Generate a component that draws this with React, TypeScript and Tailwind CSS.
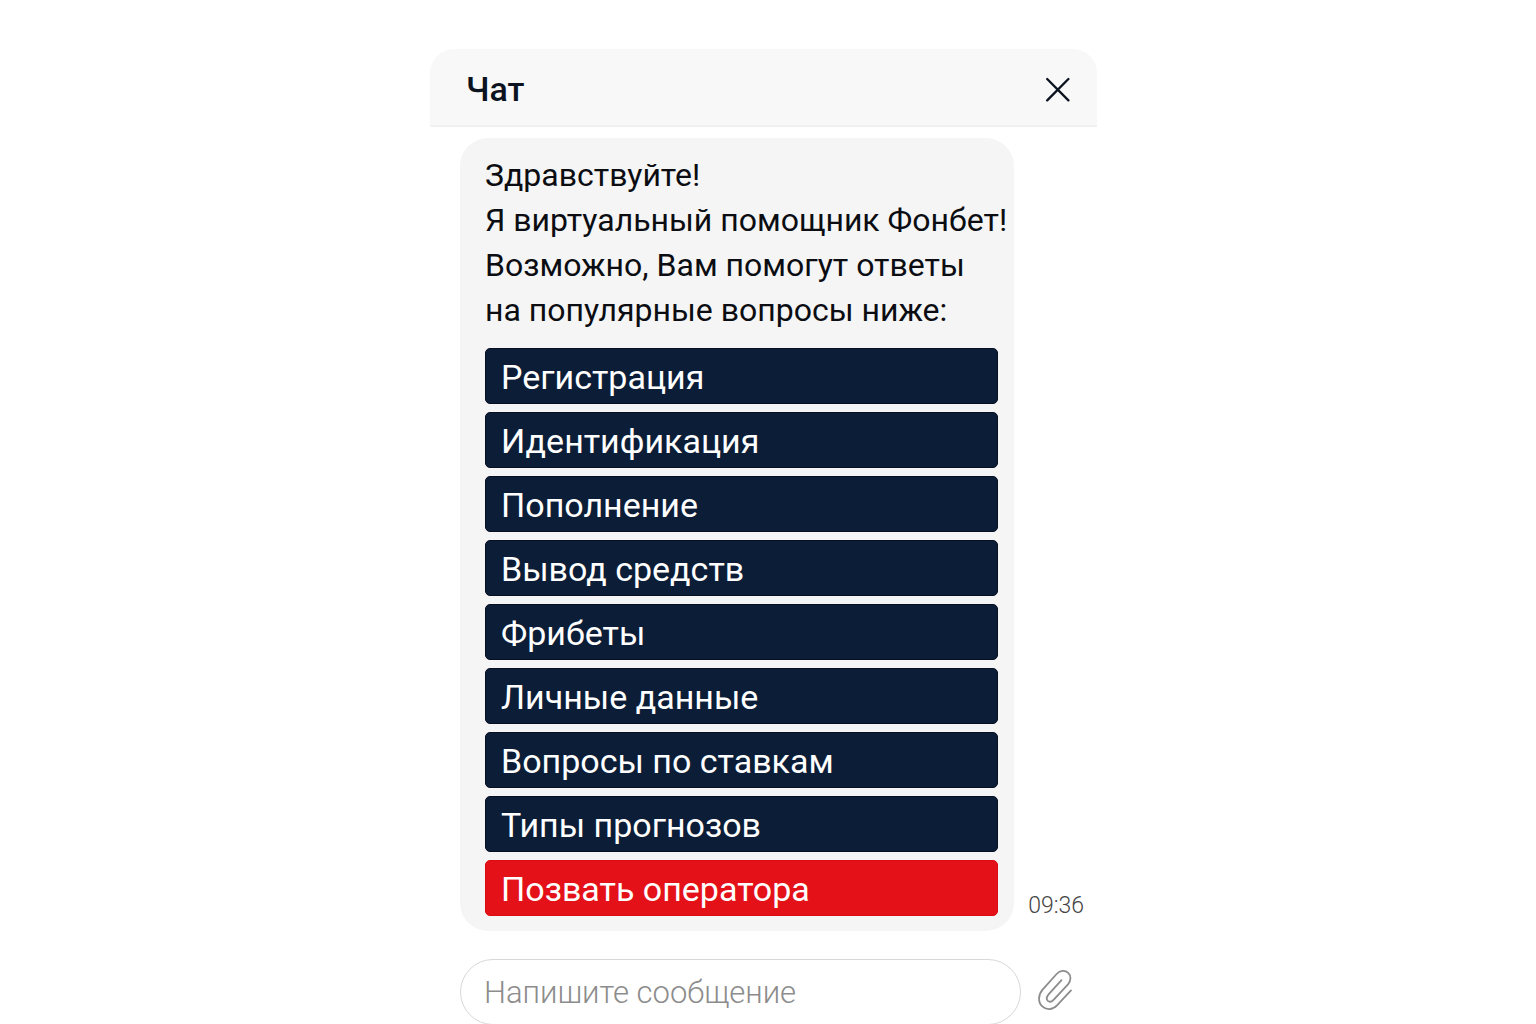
const greeting = [
  "Здравствуйте!",
  "Я виртуальный помощник Фонбет!",
  "Возможно, Вам помогут ответы",
  "на популярные вопросы ниже:",
];

const topics = [
  "Регистрация",
  "Идентификация",
  "Пополнение",
  "Вывод средств",
  "Фрибеты",
  "Личные данные",
  "Вопросы по ставкам",
  "Типы прогнозов",
];

function CloseIcon() {
  return (
    <svg
      viewBox="0 0 26 26"
      className="size-[26px]"
      fill="none"
      stroke="currentColor"
      strokeWidth="2.3"
      strokeLinecap="round"
      aria-hidden="true"
    >
      <path d="M2.2 3 23.4 24.4M23.4 3 2.2 24.4" />
    </svg>
  );
}

function PaperclipIcon() {
  return (
    <svg
      viewBox="0 0 36 42"
      className="h-[42px] w-9"
      fill="none"
      stroke="currentColor"
      strokeWidth="1.8"
      strokeLinecap="round"
      strokeLinejoin="round"
      aria-hidden="true"
    >
      <path d="M24.5 11.2 11.8 25.2C9.4 28 9.2 30.4 10.8 31.9C12.6 33.4 14.8 32.8 16.8 30.6L31 15.4C34.2 11.4 34.2 6.6 31.2 3.8C27.8 .8 23 1.4 19.6 5L5.6 20.6C1.2 25.6 .8 33 5 37.2C9.2 41.4 15.6 41 20 36.4L34 21.4" />
    </svg>
  );
}

export default function App() {
  return (
    <main className="flex h-screen justify-center overflow-hidden bg-white pt-[49px] pr-[9px] font-['Roboto',sans-serif] text-[#0b0d12]">
      <section aria-labelledby="chat-title" className="w-full max-w-[667px]">
        <header className="flex h-[78px] items-center justify-between rounded-t-3xl border-b-2 border-[#f0f0f0] bg-[#f8f8f8] pt-1 pr-[26px] pl-9">
          <h1 id="chat-title" className="text-[34px] leading-10 font-medium text-[#0b1220]">
            Чат
          </h1>
          <button type="button" aria-label="Закрыть" className="text-[#0b1220]">
            <CloseIcon />
          </button>
        </header>

        <div className="flex items-end gap-[14px] pt-[11px] pr-[13px] pl-[30px]">
          <div className="min-w-0 flex-1 rounded-[28px] bg-[#f5f5f5] pt-[15px] pr-4 pb-[15px] pl-[25px]">
            <p className="text-[32px] leading-[45px] whitespace-nowrap">
              {greeting.map((line) => (
                <span key={line} className="block">
                  {line}
                </span>
              ))}
            </p>
            <div className="mt-[15px] flex flex-col gap-2">
              {topics.map((topic) => (
                <button
                  key={topic}
                  type="button"
                  className="h-14 rounded-[5px] border border-[#050f22] bg-[#0c1d37] px-[15px] pt-[2px] text-left text-[34px] leading-[51px] text-white"
                >
                  {topic}
                </button>
              ))}
              <button
                type="button"
                className="h-14 rounded-[5px] border border-[#dc0a12] bg-[#e41119] px-[15px] pt-[2px] text-left text-[34px] leading-[51px] text-white"
              >
                Позвать оператора
              </button>
            </div>
          </div>
          <time className="pb-[11px] text-[23px] leading-7 font-light text-[#444]">09:36</time>
        </div>

        <form className="flex items-center gap-4 pt-7 pr-6 pl-[30px]">
          <input
            type="text"
            aria-label="Сообщение"
            placeholder="Напишите сообщение"
            className="h-[66px] min-w-0 flex-1 rounded-full border border-[#d8d8d8] bg-white px-[23px] text-[31px] font-light outline-none placeholder:text-[#8c8c8c]"
          />
          <button type="button" aria-label="Прикрепить файл" className="mb-1 text-[#8c8c8c]">
            <PaperclipIcon />
          </button>
        </form>
      </section>
    </main>
  );
}
